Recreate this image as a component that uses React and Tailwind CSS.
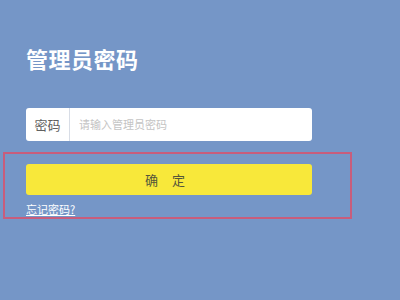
import React from 'react';

const App = () => {
  return (
    <div
      className="relative w-[400px] h-[300px] overflow-hidden bg-[#7596c7] px-[26px] pt-[44px]"
      style={{ fontFamily: '"Noto Sans CJK SC", "Noto Sans", sans-serif' }}
    >
      {/* Título */}
      <h1 className="text-[22px] leading-[28px] font-bold text-white tracking-[0.5px]">管理员密码</h1>

      {/* Campo de contraseña */}
      <div className="mt-[36px] flex w-[286px] h-[33px] bg-white rounded-[3px] overflow-hidden">
        <div className="w-[44px] flex items-center justify-center border-r border-[#d8dde6] text-[13px] text-[#606060]">
          密码
        </div>
        <input
          type="password"
          placeholder="请输入管理员密码"
          className="flex-1 px-[9px] text-[11px] outline-none placeholder:text-[#c4c4c4] bg-transparent"
        />
      </div>

      <button className="mt-[23px] w-[286px] h-[31px] rounded-[3px] bg-[#f8e83a] text-[13px] text-[#55553a] flex items-center justify-center gap-[14px] pr-[8px]">
        <span>确</span>
        <span>定</span>
      </button>

      <a href="#" className="mt-[7px] block w-fit text-[11px] leading-[14px] text-white underline underline-offset-[1px]">
        忘记密码?
      </a>

      {/* Marco de anotación */}
      <div className="absolute left-[3px] top-[152px] w-[349px] h-[67px] border-2 border-[#c75d7c] pointer-events-none" />
    </div>
  );
};

export default App;
